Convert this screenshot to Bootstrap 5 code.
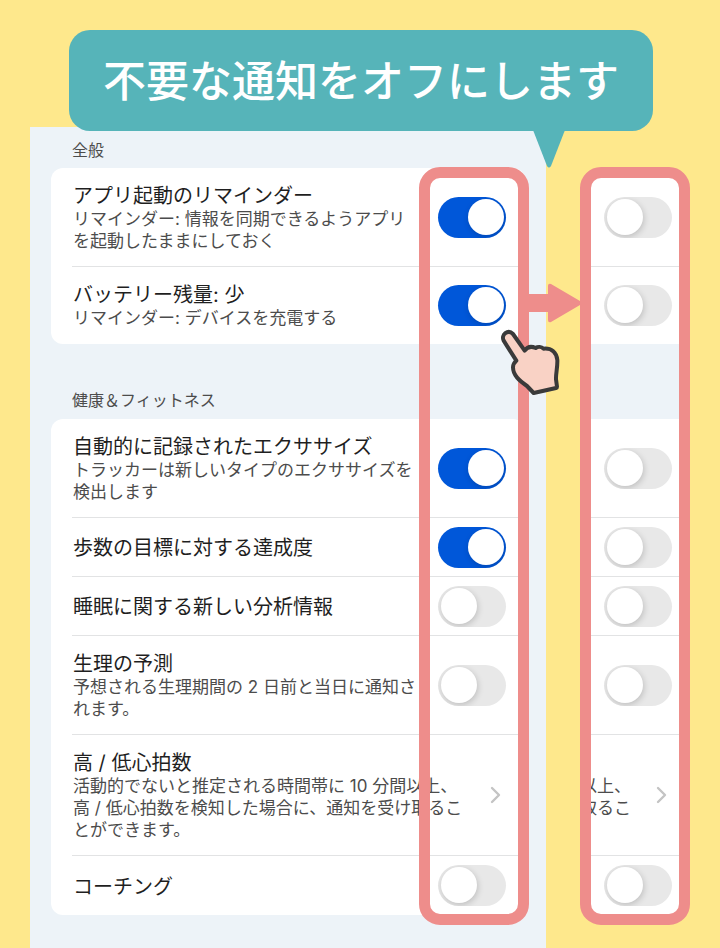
<!DOCTYPE html>
<html lang="ja">
<head>
<meta charset="utf-8">
<meta name="viewport" content="width=device-width, initial-scale=1">
<title>不要な通知をオフにします</title>
<link href="https://cdn.jsdelivr.net/npm/bootstrap@5.3.0/dist/css/bootstrap.min.css" rel="stylesheet">
<style>
:root{--pink:#ee8d8b;--teal:#56b4b9;--sky:#edf3f8;--line:#e2e3e4}
body{background:#fee88c;color:#1f1f1f;font-family:Inter,"Noto Sans CJK JP",sans-serif;font-size:20px;line-height:24px}
.bubble{margin:30px 67px 0 69px;padding:22px 16px 21px;border-radius:21px;background:var(--teal);z-index:3}
.bubble h1{font-size:43px;line-height:58px;font-weight:500}
.tail{right:88px;top:100px;width:32px;height:38px}
.stage{margin-top:-4px;padding:0 30px;gap:34px}
.panel{background:var(--sky);padding:0 21px 34px}
.group-title{font-size:16px;line-height:24px;font-weight:400;color:#4c4c4c;padding:11px 21px 6px}
.group-title.later{padding:44px 21px 7px}
.sheet{background:#fff;border-radius:12px;padding-left:21px}
.item{border-bottom:1px solid var(--line);padding-right:19px;min-height:59px}
.item:last-child{border-bottom:0}
.item-text{padding:16px 0 14px 1px;white-space:nowrap}
.sheet .item-text.pair{padding-bottom:15px}
.item-text h3{font-size:20px;line-height:24px;font-weight:400}
.item-text p,.cut-text{font-size:17px;line-height:22px;color:#4c4c4c}
.chevron{width:12px;height:18px;fill:none;stroke:#c4c4c4;stroke-width:2.4;stroke-linecap:round;stroke-linejoin:round}
.item .chevron{margin-right:5px}
.toggle.form-check-input{width:68px;height:41px;margin:0;border:0;border-radius:21px;background:#e8e8e8;overflow:hidden;position:relative;float:none;flex:none}
.toggle.form-check-input:checked{background:#0057d9}
.toggle::before{content:"";display:block;width:36px;height:36px;margin:2px 0 0 3px;border-radius:50%;background:#fff;box-shadow:1px 2px 6px rgba(0,0,0,.18)}
.toggle:checked::before{margin-left:30px}
.ring{top:40px;bottom:-10px;right:-4px;width:110px;border:11px solid var(--pink);border-radius:21px;pointer-events:none}
.arrow{top:156px;right:-56px;width:54px;height:40px}
.hand{top:193px;right:-45px;width:80px;height:85px;z-index:2}
.result{width:110px;margin-top:40px;border:11px solid var(--pink);border-radius:21px;background:#fff}
.result-list{margin:-10px 0 -1px}
.cell{border-bottom:1px solid var(--line);padding-right:7px;height:59px}
.cell.two{height:77px}
.cell.three{height:99px}
.cell.four{height:121px;padding-right:12px}
.cell.end{border-bottom:0}
.result-gap{height:75px;background:var(--sky)}
.cut-text{white-space:nowrap;margin-left:-11px;padding-top:4px}
</style>
</head>
<body class="min-vh-100 d-flex flex-column">
<header class="bubble position-relative text-center text-white">
  <h1 class="m-0 text-nowrap">不要な通知をオフにします</h1>
  <svg class="tail position-absolute" viewBox="0 0 32 38" aria-hidden="true"><path d="M0 0H32L18 36Q16 39 14 36Z" fill="#56b4b9"/></svg>
</header>
<main class="stage d-flex align-items-start flex-fill">
  <div class="panel flex-fill align-self-stretch">
    <div class="position-relative">
      <section>
        <h2 class="group-title m-0">全般</h2>
        <div class="sheet">
          <div class="item d-flex align-items-center justify-content-between">
            <label class="item-text" for="a1"><h3 class="m-0">アプリ起動のリマインダー</h3><p class="m-0">リマインダー: 情報を同期できるようアプリ<br>を起動したままにしておく</p></label>
            <input class="form-check-input toggle" type="checkbox" role="switch" id="a1" checked>
          </div>
          <div class="item d-flex align-items-center justify-content-between">
            <label class="item-text pair" for="a2"><h3 class="m-0">バッテリー残量: 少</h3><p class="m-0">リマインダー: デバイスを充電する</p></label>
            <input class="form-check-input toggle" type="checkbox" role="switch" id="a2" checked>
          </div>
        </div>
      </section>
      <section>
        <h2 class="group-title later m-0">健康＆フィットネス</h2>
        <div class="sheet">
          <div class="item d-flex align-items-center justify-content-between">
            <label class="item-text" for="a3"><h3 class="m-0">自動的に記録されたエクササイズ</h3><p class="m-0">トラッカーは新しいタイプのエクササイズを<br>検出します</p></label>
            <input class="form-check-input toggle" type="checkbox" role="switch" id="a3" checked>
          </div>
          <div class="item d-flex align-items-center justify-content-between">
            <label class="item-text" for="a4"><h3 class="m-0">歩数の目標に対する達成度</h3></label>
            <input class="form-check-input toggle" type="checkbox" role="switch" id="a4" checked>
          </div>
          <div class="item d-flex align-items-center justify-content-between">
            <label class="item-text" for="a5"><h3 class="m-0">睡眠に関する新しい分析情報</h3></label>
            <input class="form-check-input toggle" type="checkbox" role="switch" id="a5">
          </div>
          <div class="item d-flex align-items-center justify-content-between">
            <label class="item-text" for="a6"><h3 class="m-0">生理の予測</h3><p class="m-0">予想される生理期間の 2 日前と当日に通知さ<br>れます。</p></label>
            <input class="form-check-input toggle" type="checkbox" role="switch" id="a6">
          </div>
          <a href="#" class="item d-flex align-items-center justify-content-between text-reset text-decoration-none">
            <div class="item-text"><h3 class="m-0">高 / 低心拍数</h3><p class="m-0">活動的でないと推定される時間帯に 10 分間以上、<br>高 / 低心拍数を検知した場合に、通知を受け取るこ<br>とができます。</p></div>
            <svg class="chevron" viewBox="0 0 12 18" aria-hidden="true"><path d="M3 2L10 9L3 16"/></svg>
          </a>
          <div class="item d-flex align-items-center justify-content-between">
            <label class="item-text" for="a7"><h3 class="m-0">コーチング</h3></label>
            <input class="form-check-input toggle" type="checkbox" role="switch" id="a7">
          </div>
        </div>
      </section>
      <div class="ring position-absolute"></div>
      <svg class="arrow position-absolute" viewBox="0 0 54 40" aria-hidden="true"><path d="M0 11H21V3Q21 0 24 1L53 18Q55 20 53 22L24 39Q21 40 21 37V29H0Z" fill="#ee8d8b"/></svg>
      <svg class="hand position-absolute" viewBox="0 0 240 255" aria-hidden="true"><path d="M79 122L41 62C32 44 54 27 69 42L104 92C112 80 124 78 137 84C144 79 154 80 161 86C184 84 199 96 202 120C203 142 197 162 198 178L201 200Q201 203 198 204L131 219L111 198C88 182 69 166 69 142C69 134 73 127 79 122Z" fill="#f9d2c5" stroke="#3a3a3a" stroke-width="12" stroke-linejoin="round"/></svg>
    </div>
  </div>
  <section class="result overflow-hidden flex-shrink-0" aria-label="オフ">
    <div class="result-list">
      <div class="cell three d-flex align-items-center justify-content-end"><input class="form-check-input toggle" type="checkbox" role="switch" aria-label="アプリ起動のリマインダー"></div>
      <div class="cell two end d-flex align-items-center justify-content-end"><input class="form-check-input toggle" type="checkbox" role="switch" aria-label="バッテリー残量"></div>
      <div class="result-gap"></div>
      <div class="cell three d-flex align-items-center justify-content-end"><input class="form-check-input toggle" type="checkbox" role="switch" aria-label="自動的に記録されたエクササイズ"></div>
      <div class="cell d-flex align-items-center justify-content-end"><input class="form-check-input toggle" type="checkbox" role="switch" aria-label="歩数の目標に対する達成度"></div>
      <div class="cell d-flex align-items-center justify-content-end"><input class="form-check-input toggle" type="checkbox" role="switch" aria-label="睡眠に関する新しい分析情報"></div>
      <div class="cell three d-flex align-items-center justify-content-end"><input class="form-check-input toggle" type="checkbox" role="switch" aria-label="生理の予測"></div>
      <a href="#" class="cell four d-flex align-items-center justify-content-between text-decoration-none">
        <div class="cut-text">以上、<br>取るこ</div>
        <svg class="chevron" viewBox="0 0 12 18" aria-hidden="true"><path d="M3 2L10 9L3 16"/></svg>
      </a>
      <div class="cell end d-flex align-items-center justify-content-end"><input class="form-check-input toggle" type="checkbox" role="switch" aria-label="コーチング"></div>
    </div>
  </section>
</main>
<script src="https://cdn.jsdelivr.net/npm/bootstrap@5.3.0/dist/js/bootstrap.bundle.min.js"></script>
</body>
</html>
